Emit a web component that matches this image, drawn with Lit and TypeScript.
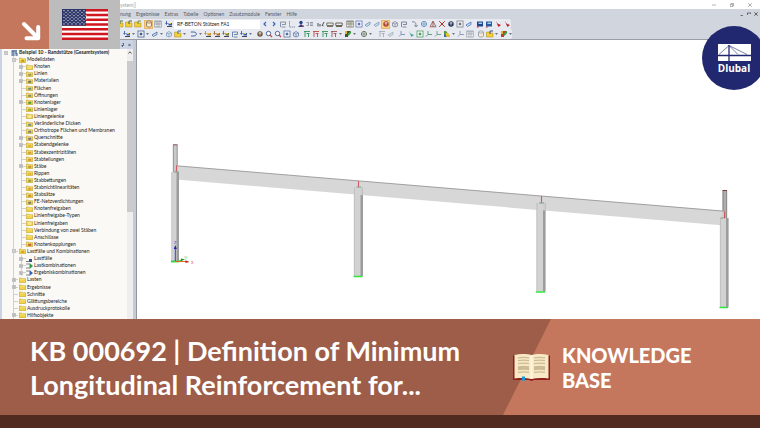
import { LitElement, html, svg, css, nothing } from "lit";
import { customElement, property } from "lit/decorators.js";
import { classMap } from "lit/directives/class-map.js";

/** Small 8x8 toolbar glyphs; each one takes its main colour. */
const glyphs: Record<string, (c: string) => unknown> = {
  folder: (c) => svg`<path d="M.5 2h3l.7 1H7v4H.5z" fill="#f2cf3a" stroke="#a8891c" stroke-width=".5"/><path d="M4 4V1h3" fill="none" stroke=${c}/>`,
  box: (c) => svg`<rect x="1" y="1" width="6" height="6" fill="#fff" stroke=${c} stroke-width=".8"/><rect x="2.7" y="2.7" width="2.6" height="2.6" fill=${c}/>`,
  table: (c) => svg`<rect x=".8" y="1" width="6.4" height="6" fill="#fff" stroke=${c} stroke-width=".7"/><path d="M1 1.8h6M1 4h6M3 2v5M5 2v5" stroke=${c} stroke-width=".7"/>`,
  cylinder: (c) => svg`<path d="M1.500 2v4c0 1.400 5 1.400 5 0V2" fill="#f6ead2" stroke=${c} stroke-width=".8"/><ellipse cx="4" cy="2" rx="2.5" ry="1" fill="#fff" stroke=${c} stroke-width=".8"/>`,
  load: (c) => svg`<path d="M1.500 1v3M.5 3l1 1.500 1-1.500" stroke=${c} stroke-width=".9" fill="none"/><path d="M2 6.500h5" stroke="#445"/><rect x="3.500" y="3" width="3.500" height="2.500" fill=${c}/><path d="M4 3h2v1H4z" fill="#e8c638"/>`,
  left: (c) => svg`<path d="M5 2 3 4l2 2" fill="none" stroke=${c} stroke-width="1.100"/>`,
  right: (c) => svg`<path d="M3 2l2 2-2 2" fill="none" stroke=${c} stroke-width="1.100"/>`,
  frame: (c) => svg`<path d="M1.500 7V2h5v2.500H3M6.500 7h-4" fill="none" stroke=${c} stroke-width=".8"/>`,
  portal: (c) => svg`<path d="M1 1.500h6M2 1.500V7M5.500 3.500V7M3.500 3.500h3" fill="none" stroke=${c} stroke-width=".9"/>`,
  corner: (c) => svg`<path d="M1.500 1v6h5.500" fill="none" stroke=${c} stroke-width=".8" stroke-dasharray="1.500 .6"/>`,
  person: (c) => svg`<circle cx="4" cy="2.500" r="1.700" fill=${c}/><path d="M1 7l3-3 3 3z" fill=${c}/><path d="M5 6h2" stroke="#c33"/>`,
  values: (c) => svg`<path d="M.5 2.500h2v3h-2M4 2.500h3M4 4h3M4 5.500h3" fill="none" stroke=${c} stroke-width=".7"/>`,
  beam: (c) => svg`<path d="M.8 3h6.400v2.500H.8zM1 6.500h6" fill="none" stroke=${c} stroke-width=".9"/>`,
  dimension: (c) => svg`<path d="M1 3v3.500M3 6.500V4M5 6l2-4M5 5l1.500 1" fill="none" stroke=${c}/>`,
  globe: (c) => svg`<circle cx="4" cy="4" r="2.600" fill="#eef3fb" stroke=${c} stroke-width=".8"/><path d="M1 4h6M4 1v6" stroke=${c} stroke-width=".7"/>`,
  filled: (c) => svg`<circle cx="4" cy="4" r="2.700" fill=${c}/><path d="M2.500 3h3M4 2v3.500" stroke="#fff" stroke-width=".7"/>`,
  solid: (c) => svg`<path d="M1.500 3 4 1.500 6.500 3v3L4 7 1.500 6z" fill="#dfe5ef" stroke=${c} stroke-width=".7"/><path d="M1.500 3 4 4l2.500-1M4 4v3" fill="none" stroke=${c} stroke-width=".6"/>`,
  slice: (c) => svg`<path d="M1 5l5-3v2.500L2.500 6.500z" fill="#c6dfee" stroke=${c} stroke-width=".7"/>`,
  curve: (c) => svg`<path d="M1 2c3-1 4 1 4 4M3.500 5 5 7l1.700-2" fill="none" stroke=${c} stroke-width=".8"/>`,
  triangle: (c) => svg`<path d="M4 1.200 7 6.800H1zM4 1v6" fill="none" stroke=${c} stroke-width=".8"/>`,
  cross: (c) => svg`<path d="M1.200 1.200l5.600 5.600M6.800 1.200 1.200 6.800" stroke=${c} stroke-width="1"/>`,
  zoom: (c) => svg`<circle cx="3.500" cy="3.500" r="2.200" fill="#fff" stroke=${c} stroke-width=".9"/><path d="M5 5l2 2" stroke="#c9483a" stroke-width="1.200"/>`,
  save: (c) => svg`<path d="M1 1.500h6v5H1z" fill=${c}/><path d="M2.500 2.500H6v1.500H2.500z" fill="#9fd0f2"/><path d="M.8 7h2" stroke="#c33"/>`,
  pin: (c) => svg`<path d="M2 1l1.500 2.500L7 5 4.500 7 3.500 5z" fill=${c}/>`,
  member: (c) => svg`<path d="M.8 2h3.200c2 0 2.500 2 2.500 2s-.5 2-2.500 2H1" fill="none" stroke=${c} stroke-width=".9"/>`,
  axes: (c) => svg`<path d="M3 1v3.500L1 6.500M3 4.500h4" fill="none" stroke=${c} stroke-width=".8"/>`,
  colours: () => svg`<path d="M1 1h2l4 5v1H1z" fill="#5a9a42"/><path d="M3 3h2l2 3v1H3z" fill="#e7c42c"/><path d="M1 4l3 3H1z" fill="#3569b4"/>`,
  flag: (c) => svg`<path d="M1 1h6L4 4v3H1z" fill=${c}/><path d="M3.500 4 7 1v2L4.500 6z" fill="#2f9e3e"/><path d="M1 1h2v3H1z" fill="#e0b92b"/>`,
};

type Tool = [glyph: string, colour: string, label: string] | "|" | "v";

const mainTools: Tool[] = [
  ["folder", "#52723a", "Neu"], ["folder", "#5e5e2c", "Bericht"], ["folder", "#6d8f3a", "Öffnen"], "|",
  ["cylinder", "#8c6c3a", "Navigator"], ["table", "#7b828e", "Tabellen"], "|", ["load", "#3558a0", "Lastfall"],
];
const resultTools: Tool[] = [
  ["left", "#2f5fc0", "Zurück"], ["right", "#2f5fc0", "Vor"], ["frame", "#6d7c96", "Verformung"], ["corner", "#6d7c96", "Schnittgrößen"],
  ["person", "#26408c", "Ansicht"], ["values", "#6e7787", "Werte"], "|", ["dimension", "#4b5058", "Bemaßung"],
  ["beam", "#6e6b58", "Stab"], ["beam", "#5d5848", "Balken"], "|", ["table", "#6c6555", "Raster"], ["box", "#6275b5", "Fläche"],
  ["slice", "#6686ac", "Schnitt"], ["slice", "#7f8ead", "Ebene"], ["filled", "#a63f2e", "Rendern"], ["solid", "#777d86", "Volumen"],
  ["frame", "#646f8a", "Rahmen"], "|", ["curve", "#687388", "Drehen"], ["globe", "#5a87b8", "Globus"], ["triangle", "#8b4b46", "Lager"],
  ["cross", "#b63229", "Löschen"], ["filled", "#223357", "Kugel"], ["box", "#737984", "Block"], ["slice", "#3f63b6", "Filter"], "|",
  ["save", "#20458d", "Speichern"], ["save", "#2959a0", "Exportieren"], ["pin", "#c22424", "Markieren"], ["pin", "#b72b2b", "PDF"],
];
const editTools: Tool[] = [
  ["load", "#3666b2", "Knoten"], "v", ["box", "#43598a", "Rechteck"], "v", ["slice", "#345a98", "Linie"], "v",
  ["solid", "#7394b8", "Körper"], ["folder", "#4a70a8", "Gruppe"], "v", "|", ["member", "#34569a", "Stabzug"], "v",
  ["load", "#c2922a", "Einzellast"], ["load", "#a36c35", "Linienlast"], ["load", "#777341", "Flächenlast"], ["frame", "#4d6fa2", "Zwang"],
  ["load", "#2b60b5", "Freie Last"], "v", "|", ["filled", "#695339", "Auswahl"], ["zoom", "#3e5590", "Vergrößern"],
  ["zoom", "#3e5590", "Verkleinern"], ["box", "#5270a5", "Alles zeigen"], ["solid", "#5571a0", "Perspektive"], "|",
  ["portal", "#35905b", "Ansicht X"], ["portal", "#c04a42", "Ansicht Y"], ["portal", "#35905b", "Ansicht Z"], ["portal", "#9d5655", "Isometrie"], "v",
  ["flag", "#4e4938", "Darstellung"], "v", "|", ["globe", "#58694f", "Arbeitsebene"], "v", "|", "|",
  ["portal", "#a5a9b2", "Fang"], ["slice", "#a5a9b2", "Hilfslinie"], "|", ["axes", "#6b83a8", "Achsen"], ["pin", "#4da89c", "Ursprung"],
  ["box", "#4e9c62", "Raster an"], ["axes", "#3f8e61", "Achse U"], ["axes", "#5a9278", "Achse V"], ["colours", "", "Farbskala"], "v",
  ["axes", "#7e8ca8", "Koordinaten"], ["table", "#8d939f", "Tabelle"], "|", ["cylinder", "#8f959e", "Material"],
  ["folder", "#455173", "Zeichnen"], "v", ["flag", "#c3392b", "Prüfen"], "v",
];

const menus = ["nung", "Ergebnisse", "Extras", "Tabelle", "Optionen", "Zusatzmodule", "Fenster", "Hilfe"];

type Row = { text: string; level: number; open?: string; icon?: string; mark?: string };
const rows: Row[] = [
  { text: "Beispiel 10 - Randstütze (Gesamtsystem)", level: 0, open: "-", icon: "model" },
  { text: "Modelldaten", level: 1, open: "-", mark: "#b58d12" },
  { text: "Knoten", level: 2, open: "+", mark: "#f7e88b" },
  { text: "Linien", level: 2, open: "+", mark: "#7d8c54" },
  { text: "Materialien", level: 2, open: "+", mark: "#3f5f6e" },
  { text: "Flächen", level: 2, mark: "#4a7d90" },
  { text: "Öffnungen", level: 2, mark: "#6b8061" },
  { text: "Knotenlager", level: 2, open: "+", mark: "#2c8a2e" },
  { text: "Linienlager", level: 2, mark: "#7fa02c" },
  { text: "Liniengelenke", level: 2, mark: "#fff3b0" },
  { text: "Veränderliche Dicken", level: 2, mark: "#4f7d9c" },
  { text: "Orthotrope Flächen und Membranen", level: 2, mark: "#5a6e8a" },
  { text: "Querschnitte", level: 2, open: "+", mark: "#5061a0" },
  { text: "Stabendgelenke", level: 2, open: "+", mark: "#d6b32c" },
  { text: "Stabexzentrizitäten", level: 2, mark: "#c7902b" },
  { text: "Stabteilungen", level: 2, mark: "#c78a2b" },
  { text: "Stäbe", level: 2, open: "+", mark: "#b6892b" },
  { text: "Rippen", level: 2, mark: "#d8b433" },
  { text: "Stabbettungen", level: 2, mark: "#7d9430" },
  { text: "Stabnichtlinearitäten", level: 2, mark: "#d29a2c" },
  { text: "Stabsätze", level: 2, mark: "#b88124" },
  { text: "FE-Netzverdichtungen", level: 2, mark: "#57666f" },
  { text: "Knotenfreigaben", level: 2 },
  { text: "Linienfreigabe-Typen", level: 2 },
  { text: "Linienfreigaben", level: 2, mark: "#fff3b0" },
  { text: "Verbindung von zwei Stäben", level: 2 },
  { text: "Anschlüsse", level: 2 },
  { text: "Knotenkopplungen", level: 2, mark: "#b8431c" },
  { text: "Lastfälle und Kombinationen", level: 1, open: "-", mark: "#c99b18" },
  { text: "Lastfälle", level: 2, open: "+", icon: "case" },
  { text: "Lastkombinationen", level: 2, open: "+", icon: "combo", mark: "#2c9a4a" },
  { text: "Ergebniskombinationen", level: 2, open: "+", icon: "combo", mark: "#2f62b8" },
  { text: "Lasten", level: 1, open: "+" },
  { text: "Ergebnisse", level: 1, open: "+" },
  { text: "Schnitte", level: 1 },
  { text: "Glättungsbereiche", level: 1 },
  { text: "Ausdruckprotokolle", level: 1 },
  { text: "Hilfsobjekte", level: 1, open: "+" },
];

@customElement("tool-strip")
class ToolStrip extends LitElement {
  @property({ attribute: false }) tools: Tool[] = [];
  @property() active = "";

  static styles = css`
    :host { display: flex; align-items: center; }
    button { flex: none; border: 0; padding: 0; background: none; display: grid; place-items: center; width: 9px; height: 9px; }
    button.active { background: #f8cf86; box-shadow: inset 0 0 0 1px #e6b673; }
    button.drop { width: 5px; }
    .icon { width: 8px; height: 8px; display: block; }
    .caret { width: 3px; height: 2px; display: block; }
    .gap { width: 2px; height: 8px; flex: none; }
  `;

  render() {
    return this.tools.map((t) => {
      if (t === "|") return html`<span class="gap"></span>`;
      if (t === "v")
        return html`<button class="drop" aria-label="Mehr"><svg class="caret" viewBox="0 0 3 2"><path d="M0 0h3L1.500 2z" fill="#70757f"/></svg></button>`;
      const [glyph, colour, label] = t;
      return html`<button class=${classMap({ active: label === this.active })} aria-label=${label}>
        <svg class="icon" viewBox="0 0 8 8">${glyphs[glyph](colour)}</svg>
      </button>`;
    });
  }
}

@customElement("model-tree")
class ModelTree extends LitElement {
  static styles = css`
    :host { display: grid; grid-template-columns: minmax(0, 1fr) 6px; min-height: 0; background: #faf9f5; }
    ul { margin: 0; padding: 0; list-style: none; display: grid; grid-auto-rows: minmax(0, 1fr); min-height: 0; }
    li { display: flex; align-items: center; min-height: 0; white-space: nowrap; color: #1c1c22; line-height: 7px; background-repeat: no-repeat; }
    .l0 { padding-left: 2px; font-weight: 700; }
    .l1 { padding-left: 10px; background-image: linear-gradient(#d2d0ca, #d2d0ca), linear-gradient(#d2d0ca, #d2d0ca); background-size: 1px 100%, 5px 1px; background-position: 11px 0, 11px 50%; }
    .l2 { padding-left: 17px; background-image: linear-gradient(#d2d0ca, #d2d0ca), linear-gradient(#d2d0ca, #d2d0ca), linear-gradient(#d2d0ca, #d2d0ca); background-size: 1px 100%, 1px 100%, 5px 1px; background-position: 11px 0, 19px 0, 19px 50%; }
    .knob { width: 4px; height: 4px; flex: none; margin-right: 3px; display: block; }
    .icon { width: 7px; height: 6px; flex: none; margin-right: 1px; display: block; }
    .scroll { background: #eeeeef; display: flex; flex-direction: column; }
    .up { height: 12px; display: grid; justify-items: center; padding-top: 2px; box-sizing: border-box; }
    .up svg { width: 4px; height: 3px; }
    .thumb { height: 56%; background: #cbcbce; }
  `;

  private icon(r: Row) {
    switch (r.icon) {
      case "model":
        return svg`<path d="M0 0h6v6H0z" fill="#aebfd8"/><path d="M1 1h5M2 1v5M4 3h2v3" stroke="#33527f" stroke-width=".9" fill="none"/>`;
      case "case":
        return svg`<path d="M0 5.500h3" stroke="#777"/><path d="M3 3h3v3H3z" fill="#37528f"/>`;
      case "combo":
        return svg`<path d="M0 1h3.500M0 5h3.500" stroke="#666" stroke-width=".8"/><path d="M3.500 0 7 3 3.500 6z" fill=${r.mark}/>`;
      default:
        return svg`<path d="M.3 1h2.200l.6.700h3.500v4H.3z" fill="#f3d34b" stroke="#b0901c" stroke-width=".5"/><path d="M.8 2.200h5.400" stroke="#fcf0a6" stroke-width=".6"/>${
          r.mark ? svg`<path d="M2.200 2.700h3v2.100h-3z" fill=${r.mark} fill-opacity=".8"/>` : nothing}`;
    }
  }

  render() {
    return html`
      <ul role="tree" aria-label="Projekt-Navigator">
        ${rows.map((r) => html`<li role="treeitem" class="l${r.level}">
          <svg class="knob" viewBox="0 0 4 4">${r.open
            ? svg`<path d="M0 0h4v4H0z" fill="#c3c3c6"/><path d="M1 1h2v2H1z" fill="#f2f2f2"/><path d=${r.open === "+" ? "M1 2h2M2 1v2" : "M1 2h2"} stroke="#888" stroke-width=".6"/>`
            : nothing}</svg>
          <svg class="icon" viewBox="0 0 7 6">${this.icon(r)}</svg>
          <span>${r.text}</span>
        </li>`)}
      </ul>
      <div class="scroll">
        <div class="up"><svg viewBox="0 0 4 3"><path d="M.5 2.500 2 .8l1.500 1.700" fill="none" stroke="#444" stroke-width=".9"/></svg></div>
        <div class="thumb"></div>
      </div>`;
  }
}

@customElement("frame-model")
class FrameModel extends LitElement {
  static styles = css`
    :host { display: block; min-width: 0; min-height: 0; overflow: hidden; background: #fff; }
    svg { display: block; width: 100%; font: 5px "Liberation Sans", sans-serif; }
  `;

  private column(x: number, top: number, bottom: number, w = 9) {
    return svg`
      <path d="M${x} ${top}h${w}V${bottom}H${x}z" fill="#d2d2d2"/>
      <path d="M${x + w - 2.5} ${top}h2.500V${bottom}h-2.500z" fill="#9c9c9c"/>
      <path d="M${x + 0.3} ${top}V${bottom}" stroke="#b4b4b4" stroke-width=".6"/>
      <path d="M${x - 0.5} ${bottom + 0.5}h${w}" stroke="#2fe43a" stroke-width="1.500"/>`;
  }

  render() {
    return html`<svg viewBox="137 40 623 279" role="img" aria-label="Rahmenmodell">
      <path d="M173 145h4.500v27H173z" fill="#c9c9c9"/><path d="M173.300 145v27M177.200 145v27" stroke="#7d7d7d" stroke-width=".7"/>
      <path d="M173 144.800h4.500" stroke="#7e4a4a"/>
      ${this.column(171.5, 172, 261, 7.5)}
      ${this.column(354, 187, 276)}
      ${this.column(536.5, 202.5, 291.5)}
      ${this.column(720, 218, 307, 8.5)}
      <path d="M722.500 190.500h4.500V218h-4.500z" fill="#adadad"/><path d="M723 190.500V218M726.700 190.500V218" stroke="#777" stroke-width=".7"/>
      <path d="M722.500 190.500h4.500" stroke="#7e3a3a"/>
      <path d="M176.500 165.800 724.500 211v14.600L179 179.800v-8h-2.500z" fill="#d3d3d3" fill-opacity=".9"/>
      <path d="M176.500 165.800 724.500 211.200" stroke="#8e8e8e" stroke-width=".8"/>
      <path d="M354.500 187.500v7M362.500 187.500v8M537 203v7M545.500 203v8M720.500 218v7" stroke="#b9b9b9" stroke-width=".7"/>
      <path d="M176.500 165.500v6M358.500 181v6M541.500 196v7M724.500 211.500v7" stroke="#cf5c5c" stroke-width="1.100"/>
      <path d="M356.500 187h4.500M539 203h5M720.500 218h3M174 172h5" stroke="#7c9b92" stroke-width="1.200"/>
      <path d="M171 261.500h8l3-1.500" stroke="#2fd43a" stroke-width="1.500" fill="none"/>
      <path d="M181 258.500l4 1-4 1.500z" fill="#158f20"/>
      <path d="M176 261.500h10" stroke="#e06a20"/><path d="M185.500 260.200l4 1.800-4 1z" fill="#c02020"/>
      <path d="M175.300 261V248" stroke="#3a3ad8"/><path d="M173.800 249l1.500-4 1.500 4z" fill="#1c1cb8"/>
      <text x="174" y="244" fill="#5a5ad8">z</text><text x="184" y="260" fill="#56c060">Y</text><text x="191" y="264" fill="#d85a5a">x</text>
    </svg>`;
  }
}

@customElement("app-root")
class AppRoot extends LitElement {
  static styles = css`
    :host { position: relative; display: flex; flex-direction: column; height: 100vh; overflow: hidden; background: #fff; font-family: Lato, "Open Sans", sans-serif; font-size: 5px; }
    button, select { font: inherit; color: inherit; border: 0; padding: 0; margin: 0; background: none; }
    a { color: inherit; text-decoration: none; }
    .desk { flex: 1; min-height: 0; display: flex; flex-direction: column; }
    .title, .menu, .tools, .edit { flex: none; display: flex; align-items: center; padding-left: 120px; }
    .title { height: 9px; color: #a2a2a2; justify-content: space-between; padding-right: 8px; }
    .title .controls { display: flex; gap: 14px; }
    .controls svg { width: 4px; height: 4px; display: block; }
    .menu { height: 10px; background: #d1d5de; color: #555b66; gap: 5px; padding-right: 2px; }
    .menu .controls { display: flex; gap: 3px; margin-left: auto; }
    .bars { background: #d1d5de; border-bottom: 1px solid #9b9da2; }
    .tools, .edit { height: 10px; background: #e7eaf1; border-radius: 0 2px 2px 0; }
    .tools { padding-left: 115px; width: 396px; }
    .edit { padding-left: 122px; width: 390px; }
    select { appearance: none; width: 86px; height: 9px; padding-left: 3px; margin-left: 1px; background: #fff; color: #222; line-height: 9px; }
    .work { flex: 1; min-height: 0; display: grid; grid-template-columns: 137px minmax(0, 1fr); }
    .side { display: grid; grid-template-rows: 9px minmax(0, 1fr); min-height: 0; padding: 0 3px 0 2px; background: linear-gradient(90deg, #c9d3e2, #c9d3e2) 0 0 / 2px 100% no-repeat, #c6cad3; border-right: 1px solid #9396a0; }
    .head { display: flex; justify-content: flex-end; align-items: center; gap: 4px; background: #cbd5e6; padding-right: 2px; }
    .head svg { width: 3px; height: 4px; display: block; }
    .brand { position: absolute; left: 0; top: 0; display: flex; height: 49px; }
    .arrow { width: 49px; background: #c5775d; display: grid; place-items: end; }
    .arrow svg { width: 30px; height: 30px; }
    .lang { width: 71px; background: #bcbcbc; display: grid; place-items: center; }
    .lang svg { width: 46px; height: 31px; display: block; }
    .logo { position: absolute; right: -6px; top: 26px; box-sizing: border-box; width: 64px; height: 64px; padding-top: 3px; border-radius: 50%; background: #222870; color: #fff; display: flex; flex-direction: column; align-items: center; justify-content: center; font: 700 10px/14px "Open Sans", sans-serif; }
    .logo svg { width: 33px; height: 17px; display: block; }
    .banner { position: relative; flex: none; display: flex; align-items: center; min-height: 96px; background: #9d5d48; color: #fff; }
    h1 { flex: 1; margin: 0; padding: 2px 0 0 30px; font: 700 27px/34px Lato, sans-serif; }
    .kb { position: relative; flex: none; box-sizing: border-box; width: 257px; min-height: 96px; padding-left: 10px; display: flex; align-items: center; gap: 12px; font: 900 20px/25px Lato, sans-serif; }
    .kb::before { content: ""; position: absolute; inset: 0; background: #c5775d; clip-path: polygon(48px 0, 100% 0, 100% 100%, 0 100%); }
    .kb > * { position: relative; }
    .kb svg { width: 37px; height: 27px; flex: none; }
    .kb span { padding-top: 2px; }
    .foot { flex: none; height: 13px; background: #512b20; }
  `;

  private star(i: number) {
    const row = Math.floor(i / 6);
    return svg`<circle cx=${2 + (i % 6) * 4 + (row % 2) * 2} cy=${1.7 + row * 1.65} r=".6"/>`;
  }

  render() {
    return html`
      <section class="desk">
        <div class="title">
          <span>ystem)]</span>
          <span class="controls">
            <button aria-label="Minimieren"><svg viewBox="0 0 4 4"><path d="M0 2h4" stroke="#888" stroke-width=".6"/></svg></button>
            <button aria-label="Wiederherstellen"><svg viewBox="0 0 4 4"><path d="M.3 1.300h2.400v2.400H.3zM1.300 1.300V.3h2.400v2.400h-1" fill="none" stroke="#777" stroke-width=".6"/></svg></button>
            <button aria-label="Schließen"><svg viewBox="0 0 4 4"><path d="M.2.2l3.600 3.600M3.800.2.2 3.800" stroke="#777" stroke-width=".6"/></svg></button>
          </span>
        </div>
        <nav class="menu">
          ${menus.map((m) => html`<button>${m}</button>`)}
          <span class="controls">
            <button aria-label="Fenster minimieren"><svg viewBox="0 0 4 4"><path d="M.5 3.500h2.500" stroke="#555" stroke-width=".8"/></svg></button>
            <button aria-label="Fenster wiederherstellen"><svg viewBox="0 0 4 4"><path d="M0 1h4M.5 1v2M3.500 1v1" fill="none" stroke="#555" stroke-width=".8"/></svg></button>
            <button aria-label="Fenster schließen"><svg viewBox="0 0 4 4"><path d="M.3.3l3.400 3.400M3.700.3.300 3.700" stroke="#555" stroke-width=".9"/></svg></button>
          </span>
        </nav>
        <div class="bars">
          <div class="tools">
            <tool-strip .tools=${mainTools} active="Navigator"></tool-strip>
            <select aria-label="Lastfall"><option>RF-BETON Stützen FA1</option></select>
            <tool-strip .tools=${resultTools} active="Rendern"></tool-strip>
          </div>
          <div class="edit"><tool-strip .tools=${editTools}></tool-strip></div>
        </div>
        <div class="work">
          <aside class="side">
            <div class="head">
              <svg viewBox="0 0 3 4"><path d="M1 0h1.500v2.500H.5M1.500 2v2" stroke="#444" stroke-width=".7" fill="none"/></svg>
              <svg viewBox="0 0 3 4"><path d="M.2.7l2.600 2.600M2.800.7.200 3.300" stroke="#444" stroke-width=".7"/></svg>
            </div>
            <model-tree></model-tree>
          </aside>
          <frame-model></frame-model>
        </div>
      </section>

      <div class="brand">
        <div class="arrow"><svg viewBox="19 19 30 30"><path d="M24 24 38 38M38.200 27v11.200H26.500" fill="none" stroke="#fff" stroke-width="4" stroke-linecap="round" stroke-linejoin="round"/></svg></div>
        <div class="lang">
          <svg viewBox="0 0 46 31" role="img" aria-label="English">
            <path d="M0 0h46v31H0z" fill="#fff"/>
            <path d="M0 1.200h46M0 6h46M0 10.700h46M0 15.500h46M0 20.300h46M0 25h46M0 29.800h46" stroke="#d0161f" stroke-width="2.400"/>
            <path d="M0 0h24v16.700H0z" fill="#2c3568"/>
            <g fill="#fff">${Array.from({ length: 54 }, (_, i) => this.star(i))}</g>
          </svg>
        </div>
      </div>

      <a class="logo" href="#">
        <svg viewBox="0 0 33 17"><path d="M0 0h33v17H0z" fill="#fff"/><path d="M0 11.500h33M11 1v16" fill="none" stroke="#222870" stroke-width="1.300"/><path d="M11 1.500 1 10.500M11 1.500l9 9M11 1.500 29 10.500" fill="none" stroke="#222870" stroke-width=".6"/></svg>
        <span>Dlubal</span>
      </a>

      <header class="banner">
        <h1>KB 000692 | Definition of Minimum<br />Longitudinal Reinforcement for...</h1>
        <div class="kb">
          <svg viewBox="0 0 37 27">
            <path d="M0 1.500h37V26H21l-2.500 1L16 26H0z" fill="#8f1d1c"/>
            <path d="M1.500 1C7-.2 14-.2 18.500 1.200 23-.2 30-.2 35.500 1v23.500c-6-.7-12-.7-17 .5-5-1.200-11-1.200-17-.5z" fill="#f8e9c6"/>
            <path d="M17.500 1h2v24h-2z" fill="#fdf4dc"/>
            <path d="M5 3.800q6-1 11 0M5 6.700q6-1 11 0M5 9.600q6-1 11 0M5 18.300q6-1 11 0M21 3.800q6-1 11 0M21 6.700q6-1 11 0M21 9.600q6-1 11 0M21 18.300q6-1 11 0" fill="none" stroke="#cdbb93" stroke-width="1.200"/>
            <path d="M5 12.200q6-1 11 0v4q-5-1-11 0zM21 12.200q6-1 11 0v4q-5-1-11 0z" fill="#cdbb93"/>
            <path d="M9 22.500h3V27l-1.500-1L9 27z" fill="#1597d4"/>
          </svg>
          <span>KNOWLEDGE<br />BASE</span>
        </div>
      </header>
      <footer class="foot"></footer>`;
  }
}
